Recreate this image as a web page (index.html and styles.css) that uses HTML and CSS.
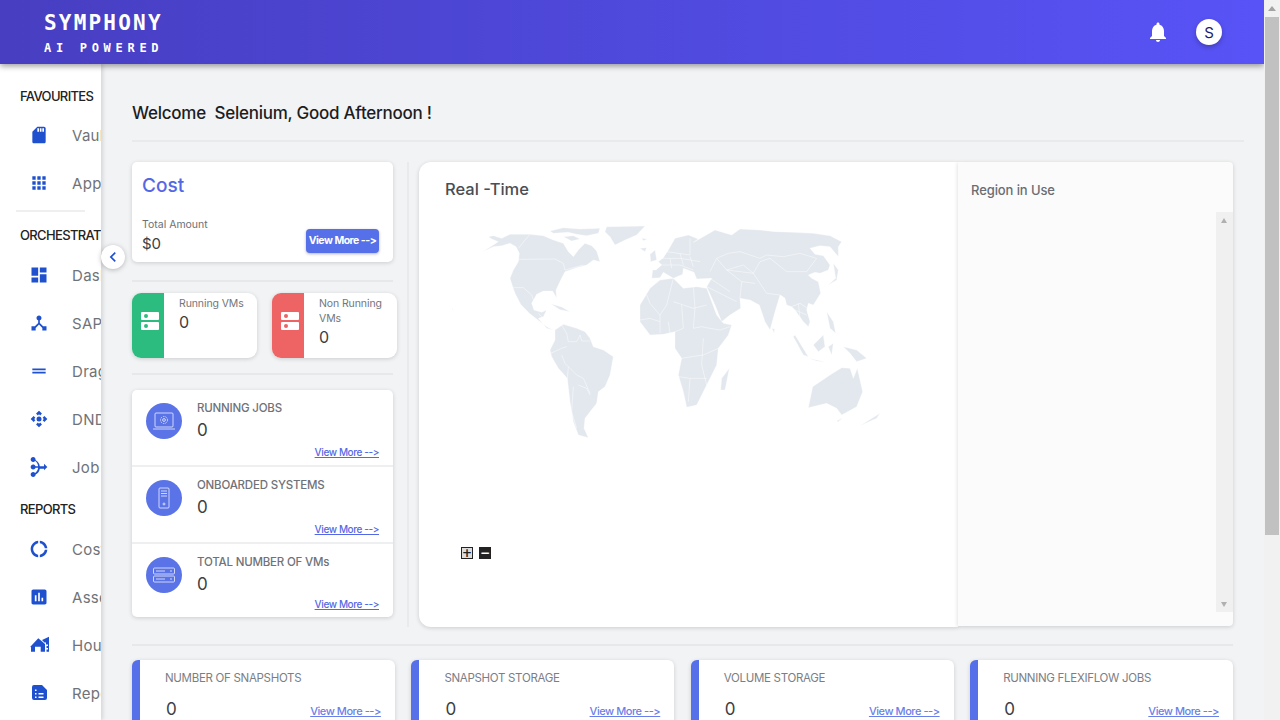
FILE: index.html
```html
<!DOCTYPE html>
<html lang="en">
<head>
<meta charset="utf-8">
<title>Symphony</title>
<link rel="stylesheet" href="styles.css">
</head>
<body>
<div class="viewport">
  <div class="app">
    <header class="topbar">
      <div class="logo">
        <div class="logo-main">SYMPHONY</div>
        <div class="logo-sub">AI POWERED</div>
      </div>
      <div class="topbar-actions">
        <svg class="bell" viewBox="0 0 24 24"><path d="M12 22c1.1 0 2-.9 2-2h-4c0 1.1.89 2 2 2zm6-6v-5c0-3.07-1.64-5.64-4.5-6.32V4c0-.83-.67-1.5-1.5-1.5s-1.5.67-1.5 1.5v.68C7.63 5.36 6 7.92 6 11v5l-2 2v1h16v-1l-2-2z"/></svg>
        <div class="avatar">S</div>
      </div>
    </header>
    <div class="body">
      <aside class="sidebar">
        <div class="side-inner">
          <h4 class="side-head">FAVOURITES</h4>
          <div class="side-item"><svg class="side-icon" viewBox="0 0 24 24"><path d="M18 2h-8L4.02 8 4 20c0 1.1.9 2 2 2h12c1.1 0 2-.9 2-2V4c0-1.1-.9-2-2-2zm-6 6h-2V4h2v4zm3 0h-2V4h2v4zm3 0h-2V4h2v4z"/></svg><span>Vault</span></div>
          <div class="side-item"><svg class="side-icon" viewBox="0 0 24 24"><path d="M4 8h4V4H4v4zm6 12h4v-4h-4v4zm-6 0h4v-4H4v4zm0-6h4v-4H4v4zm6 0h4v-4h-4v4zm6-10v4h4V4h-4zm-6 4h4V4h-4v4zm6 6h4v-4h-4v4zm0 6h4v-4h-4v4z"/></svg><span>Applications</span></div>
          <div class="side-rule"></div>
          <h4 class="side-head">ORCHESTRATION</h4>
          <div class="side-item"><svg class="side-icon" viewBox="0 0 24 24"><path d="M3 13h8V3H3v10zm0 8h8v-6H3v6zm10 0h8V11h-8v10zm0-18v6h8V3h-8z"/></svg><span>Dashboard</span></div>
          <div class="side-item"><svg class="side-icon" viewBox="0 0 24 24"><path d="M17 16l-4-4V8.82C14.16 8.4 15 7.3 15 6c0-1.66-1.34-3-3-3S9 4.34 9 6c0 1.3.84 2.4 2 2.82V12l-4 4H3v5h5v-3.05l4-4.2 4 4.2V21h5v-5h-4z"/></svg><span>SAP</span></div>
          <div class="side-item"><svg class="side-icon" viewBox="0 0 24 24"><path d="M20 9H4v2h16V9zM4 15h16v-2H4v2z"/></svg><span>Drag and Drop</span></div>
          <div class="side-item"><svg class="side-icon" viewBox="0 0 24 24"><path d="M15.54 5.54L13.41 7.66 12 6.25 10.59 7.66 8.46 5.54 12 2l3.54 3.54zm2.92 10l-2.12-2.13L17.75 12l-1.41-1.41 2.12-2.13L22 12l-3.54 3.54zm-10 2.92l2.13-2.12L12 17.75l1.41-1.41 2.12 2.12L12 22l-3.54-3.54zM5.54 8.46l2.12 2.13L6.25 12l1.41 1.41-2.12 2.13L2 12l3.54-3.54z"/><circle cx="12" cy="12" r="3"/></svg><span>DND Flow</span></div>
          <div class="side-item"><svg class="side-icon" viewBox="0 0 24 24"><path d="M18 16l4-4-4-4v3h-5.06c-.34-3.1-2.26-5.72-4.94-7.05C7.96 1.31 6.64 0 5 0 3.34 0 2 1.34 2 3s1.34 3 3 3c.95 0 1.78-.45 2.33-1.14C9.23 5.99 10.6 8.08 10.93 11h-3.1C7.4 9.84 6.3 9 5 9c-1.66 0-3 1.34-3 3s1.34 3 3 3c1.3 0 2.4-.84 2.82-2h3.1c-.32 2.92-1.69 5.01-3.6 6.14C6.78 18.45 5.95 18 5 18c-1.66 0-3 1.34-3 3s1.34 3 3 3c1.64 0 2.96-1.31 3-2.95 2.68-1.33 4.6-3.95 4.94-7.05H18v3z"/></svg><span>Job Flow</span></div>
          <h4 class="side-head side-head-reports">REPORTS</h4>
          <div class="side-item"><svg class="side-icon" viewBox="0 0 24 24"><path d="M11 5.08V2c-5 .5-9 4.81-9 10s4 9.5 9 10v-3.08c-3-.48-6-3.4-6-6.92s3-6.44 6-6.92zM18.97 11H22c-.47-5-4-8.53-9-9v3.08C16 5.51 18.54 8 18.97 11zM13 18.92V22c5-.47 8.53-4 9-9h-3.03c-.43 3-2.97 5.49-5.97 5.92z"/></svg><span>Cost</span></div>
          <div class="side-item"><svg class="side-icon" viewBox="0 0 24 24"><path d="M19 3H5c-1.1 0-2 .9-2 2v14c0 1.1.9 2 2 2h14c1.1 0 2-.9 2-2V5c0-1.1-.9-2-2-2zM9 17H7v-7h2v7zm4 0h-2V7h2v10zm4 0h-2v-4h2v4z"/></svg><span>Assets</span></div>
          <div class="side-item"><svg class="side-icon" viewBox="0 0 20 20"><path d="M1.300 11.700 9.300 3.300 16 9V16.700H11.700V11.700H6V16.700H2V12.300Z"/><path d="M13 5 20 1.700V16.700H17.500V14.500H19V13H17.500V11H19V9.500H17V7.500H15.500Z"/></svg><span>House</span></div>
          <div class="side-item"><svg class="side-icon" viewBox="0 0 20 20"><path fill-rule="evenodd" d="M5 2h8l5 5v8a2 2 0 0 1-2 2H5a2 2 0 0 1-2-2V4a2 2 0 0 1 2-2zm1 4.500v1.500h1.500V6.500zm0 3.500v1.500h1.500V10zm0 3.500V15h1.500v-1.500zm3.500-3.500v1.500h5V10zm0 3.500V15h5v-1.500z"/></svg><span>Reports</span></div>
        </div>
      </aside>
      <button class="collapse" type="button" aria-label="Collapse"><svg viewBox="0 0 24 24"><path d="M15.41 7.41L14 6l-6 6 6 6 1.41-1.41L10.83 12z"/></svg></button>
      <main class="main">
        <h1 class="welcome">Welcome&nbsp; Selenium, Good Afternoon !</h1>
        <div class="overview">
          <div class="left-col">
            <section class="card cost">
              <h2 class="cost-title">Cost</h2>
              <div class="cost-foot">
                <div>
                  <div class="cost-label">Total Amount</div>
                  <div class="cost-value">$0</div>
                </div>
                <a class="btn">View More --&gt;</a>
              </div>
            </section>
            <div class="rule rule-cost"></div>
            <div class="vm-row">
              <section class="vm">
                <div class="vm-tile vm-green">
                  <span class="vm-bar"></span><span class="vm-bar"></span>
                </div>
                <div class="vm-body"><div class="vm-label">Running VMs</div><div class="vm-value">0</div></div>
              </section>
              <section class="vm">
                <div class="vm-tile vm-red">
                  <span class="vm-bar"></span><span class="vm-bar"></span>
                </div>
                <div class="vm-body"><div class="vm-label">Non Running VMs</div><div class="vm-value">0</div></div>
              </section>
            </div>
            <div class="rule rule-vm"></div>
            <section class="card jobs">
              <div class="job">
                <div class="job-circle"><svg viewBox="0 0 36 36"><rect x="9" y="10" width="18" height="14" rx="1"/><path d="M7 26h22"/><circle cx="18" cy="17" r="3.500" stroke-dasharray="1.500 1"/><circle cx="18" cy="17" r="1.400"/></svg></div>
                <div class="job-text"><div class="job-title">RUNNING JOBS</div><div class="job-value">0</div></div>
                <a class="more job-more">View More --&gt;</a>
              </div>
              <div class="job">
                <div class="job-circle"><svg viewBox="0 0 36 36"><rect x="13" y="8" width="10" height="20" rx="1"/><path d="M15 11h6M15 13.500h6M15 16h6"/><circle cx="18" cy="24" r="1"/></svg></div>
                <div class="job-text"><div class="job-title">ONBOARDED SYSTEMS</div><div class="job-value">0</div></div>
                <a class="more job-more">View More --&gt;</a>
              </div>
              <div class="job">
                <div class="job-circle"><svg viewBox="0 0 36 36"><rect x="7.500" y="11" width="21" height="6" rx="1"/><rect x="7.500" y="19" width="21" height="6" rx="1"/><path d="M10 14h9M10 22h9M24 14h2M24 22h2"/></svg></div>
                <div class="job-text"><div class="job-title">TOTAL NUMBER OF VMs</div><div class="job-value">0</div></div>
                <a class="more job-more">View More --&gt;</a>
              </div>
            </section>
          </div>
          <div class="v-rule"></div>
          <section class="map-card">
            <h2 class="map-title">Real -Time</h2>
            <svg class="world" viewBox="0 0 1470 750">
              <g class="land">
                <path d="M175 65 190 62 215 70 240 58 300 58 340 62 370 75 400 85 415 110 430 125 445 105 465 85 485 92 500 108 510 140 490 135 470 150 440 158 405 170 392 195 378 225 380 250 368 228 340 228 320 238 305 265 312 285 335 292 350 285 340 305 325 310 350 340 368 345 350 335 320 312 298 295 272 268 255 235 248 215 240 190 250 165 265 140 268 115 258 95 240 85 215 92 190 95 158 110 205 80 185 72Z"/>
                <path d="M360 48 400 38 450 42 510 40 505 55 470 62 440 58 415 52 370 55Z"/>
                <path d="M400 65 430 62 450 72 425 78Z"/>
                <path d="M530 35 645 33 620 60 585 75 555 90 540 65 525 50Z"/>
                <path d="M635 70 652 72 640 77Z"/>
                <path d="M362 266 395 276 420 290 390 284Z"/>
                <path d="M375 345 400 328 440 340 465 350 480 370 490 395 520 405 550 425 540 480 525 515 505 530 500 565 480 590 465 610 462 640 475 668 445 660 430 620 420 560 412 490 385 460 365 425 360 405 375 375Z"/>
                <circle cx="68" cy="282" r="1.500"/>
              </g>
              <g class="land" transform="translate(690 0)">
                <path d="M-25 190 -22 165 -12 165 5 150 -5 140 10 128 25 105 45 70 85 60 115 72 100 82 130 65 165 45 215 60 240 42 300 45 345 50 400 52 460 55 510 62 545 80 535 95 535 125 510 95 480 92 450 100 465 118 490 122 510 150 505 165 480 175 465 172 445 180 455 190 475 200 482 235 460 270 445 265 440 285 450 320 445 335 430 320 405 285 395 275 380 270 375 250 360 240 345 290 330 345 315 320 298 270 270 255 240 250 242 280 210 300 185 320 165 270 140 215 155 190 110 192 102 172 70 160 68 178 40 190 10 172 0 188Z"/>
                <path d="M140 220 170 300 190 325 215 330 205 360 175 400 170 450 140 510 110 570 80 577 70 530 55 480 65 430 45 400 45 350 10 358 -30 360 -60 320 -60 270 -30 220 0 195 40 190 70 220 110 215Z"/>
                <path d="M208 460 195 525 182 525 185 490Z"/>
                <path d="M545 458 570 460 580 490 592 460 608 530 590 575 545 600 530 580 500 565 445 578 458 515 510 480Z"/>
                <path d="M600 632 660 595 650 610Z"/>
                <path d="M530 618 548 608 535 620Z"/>
                <path d="M405 360 445 425 430 420 400 365Z"/>
                <path d="M460 390 490 360 495 395 475 410Z"/>
                <path d="M445 430 500 442 470 438Z"/>
                <path d="M505 395 520 385 515 420Z"/>
                <path d="M550 395 590 405 620 430 590 440 570 415Z"/>
                <path d="M500 290 520 320 527 355 510 340Z"/>
                <path d="M505 210 530 195 535 165 520 145 527 190Z"/>
                <path d="M336 340 344 342 342 354Z"/>
                <path d="M-30 118 -15 105 -10 135 -28 140Z"/>
                <path d="M-60 100 -40 98 -45 110Z"/>
              </g>
              <g class="borders">
                <path d="M300 58 285 75 265 100M265 133 375 132 400 145 405 165 460 150M250 218 280 218 305 240 312 260M325 295 345 315M395 330 410 355 415 380 440 380 450 360 455 378 480 378M362 415 395 400 410 395M395 420 405 445 415 455 440 480 460 490 480 535M430 515 425 590 440 640M415 455 412 490M445 510 470 520 480 540"/>
              </g>
              <g class="borders" transform="translate(690 0)">
                <path d="M-40 240 -30 265 0 300 20 270 40 190M40 260 70 270 100 280 140 270M100 215 105 280 100 340 125 335 150 340 180 345 210 335M65 270 70 340 45 350M0 300 0 355M-60 315 -30 310 0 320M25 320 30 355M65 430 95 425 130 420 175 400M130 370 125 450 140 510M55 485 90 490 140 490M90 490 85 560M150 170 170 130 205 115 240 110 270 120 300 130 320 120 370 125 420 115 470 130 440 170 380 170 330 130 300 140 280 175 300 205 320 235 360 240 375 250M170 130 200 165 250 150 280 175M240 250 245 200 200 165M140 215 180 235 230 260M150 190 210 230M395 275 420 265 450 285M405 285 440 300M0 130 60 130 120 140M20 110 90 120 90 70M0 150 60 150 100 165M30 130 35 160M60 115 70 150M90 125 100 155M200 165 280 175M245 200 285 205M415 265 420 310"/>
              </g>
            </svg>
            <div class="zoom-btns">
              <span class="zoom zoom-in">+</span>
              <span class="zoom zoom-out">−</span>
            </div>
          </section>
          <section class="region-card">
            <h3 class="region-title">Region in Use</h3>
            <div class="region-track"><span class="tri-up"></span><span class="tri-down"></span></div>
          </section>
        </div>
        <div class="rule rule-bottom"></div>
        <div class="stats">
          <section class="stat"><div class="stat-title">NUMBER OF SNAPSHOTS</div><div class="stat-foot"><span class="stat-value">0</span><a class="more">View More --&gt;</a></div></section>
          <section class="stat"><div class="stat-title">SNAPSHOT STORAGE</div><div class="stat-foot"><span class="stat-value">0</span><a class="more">View More --&gt;</a></div></section>
          <section class="stat"><div class="stat-title">VOLUME STORAGE</div><div class="stat-foot"><span class="stat-value">0</span><a class="more">View More --&gt;</a></div></section>
          <section class="stat"><div class="stat-title">RUNNING FLEXIFLOW JOBS</div><div class="stat-foot"><span class="stat-value">0</span><a class="more">View More --&gt;</a></div></section>
        </div>
      </main>
    </div>
  </div>
  <div class="scrollbar"><span class="tri-up scroll-arrow"></span><div class="thumb"></div></div>
</div>
</body>
</html>
```
FILE: styles.css
```css
* { box-sizing: border-box; }
html, body { margin: 0; padding: 0; height: 100%; overflow: hidden; }
body { font-family: Inter, "Noto Sans", sans-serif; color: #3c4043; background: #f2f3f5; }
h1, h2, h3, h4 { margin: 0; font-weight: 500; }
.viewport { display: flex; width: 1280px; height: 720px; overflow: hidden; }
.app { position: relative; width: 1264px; height: 720px; display: flex; flex-direction: column; overflow: hidden; }

.topbar { position: relative; z-index: 3; flex: none; height: 64px; display: flex; justify-content: space-between; align-items: center; padding: 0 42px 0 44px; background: linear-gradient(90deg, #473ec1 0%, #4f49dc 50%, #5853f6 100%); box-shadow: 0 2px 6px rgba(0,0,0,.4); }
.logo { color: #fff; font-family: "DejaVu Sans Mono", "Liberation Mono", monospace; font-weight: 700; }
.logo-main { font-size: 21px; line-height: 24px; letter-spacing: 2.200px; margin-top: 2px; }
.logo-sub { font-size: 12px; line-height: 16px; letter-spacing: 4.700px; margin-top: 5px; }
.topbar-actions { display: flex; align-items: center; gap: 26px; }
.bell { width: 24px; height: 24px; fill: #fff; display: block; }
.avatar { width: 26px; height: 26px; border-radius: 50%; background: #fff; color: #1d1b6e; font-size: 15px; display: flex; align-items: center; justify-content: center; box-shadow: 0 2px 5px rgba(0,0,0,.25); }

.body { flex: 1; min-height: 0; display: flex; position: relative; }
.sidebar { flex: none; width: 101px; background: #fff; overflow: hidden; box-shadow: 2px 0 4px rgba(0,0,0,.12); position: relative; z-index: 2; }
.side-inner { width: 200px; padding: 20px 0 0 0; }
.side-head { font-size: 13px; font-weight: 500; color: #222; line-height: 24px; height: 24px; padding-left: 20px; margin-bottom: 3px; letter-spacing: -.65px; white-space: nowrap; }
.side-head-reports { margin-top: 6px; margin-bottom: 4px; }
.side-rule { width: 69px; height: 2px; margin: 3px 0 11px 16px; background: #eeeff1; }
.side-item { height: 48px; display: flex; align-items: center; padding-left: 29px; gap: 23px; font-size: 15px; letter-spacing: .3px; color: #6f7378; white-space: nowrap; }
.side-rule + .side-head { margin-bottom: 4px; }
.side-icon { flex: none; width: 20px; height: 20px; fill: #1f51cf; display: block; }

.collapse { position: absolute; z-index: 4; left: 101px; top: 181px; width: 24px; height: 24px; padding: 0; border: 0; border-radius: 50%; background: #fff; box-shadow: 0 1px 5px rgba(0,0,0,.25); display: flex; align-items: center; justify-content: center; }
.collapse svg { width: 20px; height: 20px; fill: #1f51cf; display: block; }

.main { flex: 1; min-width: 0; padding: 0 20px 0 31px; overflow: hidden; }
.welcome { height: 78px; padding-top: 38px; border-bottom: 2px solid #e9eaec; font-size: 17px; line-height: 23px; font-weight: 500; color: #1d1d1f; letter-spacing: -.25px; white-space: nowrap; }
.overview { display: flex; margin: 20px 11px 0 0; height: 465px; }
.left-col { flex: none; width: 261px; display: flex; flex-direction: column; }
.card { background: #fff; border-radius: 5px; box-shadow: 0 1px 4px rgba(0,0,0,.16); }
.cost { height: 100px; padding: 11px 14px 0 10px; flex: none; }
.cost-title { font-size: 19px; line-height: 26px; color: #5468e6; font-weight: 500; }
.cost-foot { display: flex; justify-content: space-between; align-items: flex-end; margin-top: 19px; }
.cost-label { font-size: 10.500px; line-height: 16px; color: #6c6f76; margin-top: -1px; }
.cost-value { font-size: 15px; line-height: 22px; color: #3c4043; }
.btn { display: block; width: 73px; height: 24px; margin-bottom: 2px; border-radius: 4px; background: #5570e8; color: #fff; font-size: 10.500px; font-weight: 700; line-height: 24px; text-align: center; letter-spacing: -.5px; box-shadow: 0 1px 3px rgba(0,0,0,.3); white-space: nowrap; }
.rule { height: 2px; background: #e7e8ea; flex: none; }
.rule-cost { margin: 18px 0 11px; }
.rule-vm { margin: 15px 0; }
.vm-row { display: flex; gap: 15px; width: 265px; flex: none; }
.vm { flex: none; width: 125px; height: 65px; display: flex; background: #fff; border-radius: 9px; box-shadow: 0 1px 4px rgba(0,0,0,.16); overflow: hidden; }
.vm-tile { flex: none; width: 32px; padding: 0 0 9px 3px; display: flex; flex-direction: column; align-items: center; justify-content: center; gap: 2px; }
.vm-green { background: #2dbc80; color: #2dbc80; }
.vm-red { background: #ee6363; color: #ee6363; }
.vm-bar { position: relative; display: block; width: 18px; height: 8px; border-radius: 1px; background: #fff; }
.vm-bar::after { content: ""; position: absolute; left: 3px; top: 2px; width: 4px; height: 4px; border-radius: 50%; background: currentColor; }
.vm-body { padding: 3px 6px 0 15px; }
.vm-label { font-size: 10.500px; line-height: 15px; color: #73767c; letter-spacing: -.1px; }
.vm-value { font-size: 16px; line-height: 23px; color: #3c4043; }

.jobs { flex: none; height: 227px; display: flex; flex-direction: column; }
.job { position: relative; flex: none; height: 77px; display: flex; padding: 13px 14px 0 14px; gap: 15px; border-bottom: 2px solid #eeeff1; }
.job:last-child { height: 73px; border-bottom: 0; }
.job-circle { flex: none; width: 36px; height: 36px; border-radius: 50%; background: #5a73e6; }
.job-circle svg { width: 36px; height: 36px; display: block; fill: none; stroke: #fff; stroke-width: .8; opacity: .9; }
.job-title { font-size: 11.500px; line-height: 15px; color: #6f7278; font-weight: 500; margin-top: -2px; letter-spacing: -.2px; white-space: nowrap; }
.job-value { font-size: 17px; line-height: 24px; color: #3c4043; margin-top: 2px; }
.more { font-size: 10px; color: #5468e6; text-decoration: underline; font-weight: 500; letter-spacing: -.4px; white-space: nowrap; }
.job-more { position: absolute; right: 14px; bottom: 6px; line-height: 14px; }

.v-rule { flex: none; width: 2px; background: #e9eaec; margin: 0 10px 0 14px; }
.map-card { position: relative; flex: none; width: 539px; background: #fff; border-radius: 12px 0 0 12px; box-shadow: 0 1px 4px rgba(0,0,0,.16); padding: 16px 0 0 26px; }
.map-title { font-size: 16.500px; line-height: 22px; color: #4a4d52; font-weight: 500; }
.world { display: block; width: 490px; height: 250px; margin: 15px 0 0 -15px; }
.land { fill: #e3e8ee; stroke: #fff; stroke-width: 1; stroke-linejoin: round; }
.borders { fill: none; stroke: #fff; stroke-width: 1.500; opacity: .9; }
.zoom-btns { display: flex; gap: 6px; margin: 82px 0 0 16px; }
.zoom { width: 12px; height: 12px; display: flex; align-items: center; justify-content: center; font-size: 12px; font-weight: 700; line-height: 1; font-family: "DejaVu Sans", sans-serif; }
.zoom-in { background: #ddd; border: 1px solid #222; color: #222; }
.zoom-out { background: #222; color: #fff; }
.region-card { position: relative; flex: 1; height: 464px; background: #fbfbfb; border-radius: 0 4px 4px 0; box-shadow: 0 1px 4px rgba(0,0,0,.16); padding: 19px 0 0 13px; }
.region-title { font-size: 13px; line-height: 18px; color: #6a6d72; font-weight: 500; letter-spacing: -.1px; }
.region-track { position: absolute; right: 0; top: 50px; bottom: 14px; width: 17px; background: #f0f0f0; }
.tri-up, .tri-down { position: absolute; left: 5px; width: 0; height: 0; border-left: 3.500px solid transparent; border-right: 3.500px solid transparent; }
.tri-up { top: 6px; border-bottom: 5px solid #b0b0b0; }
.tri-down { bottom: 5px; border-top: 5px solid #b0b0b0; }

.rule-bottom { margin: 17px 11px 14px 0; }
.stats { display: grid; grid-template-columns: repeat(4, 1fr); gap: 16.500px; margin-right: 11px; }
.stat { height: 90px; background: #fff; border-left: 8px solid #5570e8; border-radius: 6px; box-shadow: 0 1px 4px rgba(0,0,0,.16); padding: 10px 14px 0 25px; }
.stat-title { font-size: 11.500px; line-height: 16px; color: #7b7e84; white-space: nowrap; letter-spacing: -.3px; }
.stat-foot { display: flex; justify-content: space-between; align-items: center; margin-top: 11px; }
.stat-value { font-size: 17px; line-height: 24px; color: #3c4043; margin-left: 1px; }
.stat .more { font-size: 11px; color: #6b7fe8; position: relative; top: 2px; letter-spacing: -.45px; }

.scrollbar { position: relative; flex: none; width: 16px; height: 720px; background: #f1f1f1; }
.scroll-arrow { left: 4px; top: 6px; border-left-width: 4px; border-right-width: 4px; border-bottom: 5px solid #a3a3a3; }
.thumb { position: absolute; left: 1px; top: 17px; width: 14px; height: 518px; background: #c1c1c1; }
```
